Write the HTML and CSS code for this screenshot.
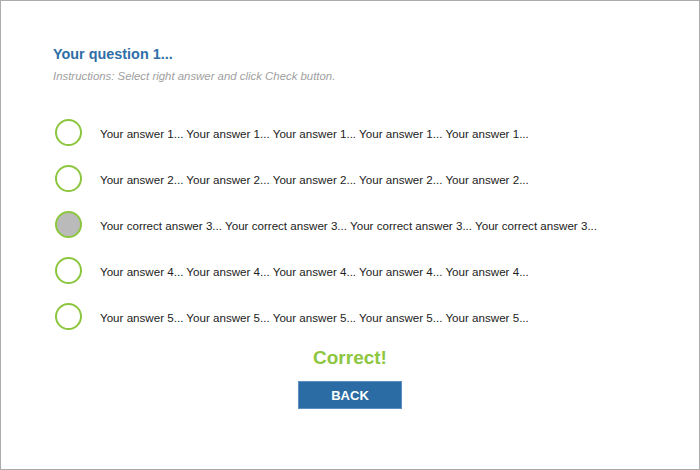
FILE: index.html
```html
<!DOCTYPE html>
<html lang="en">
<head>
  <meta charset="UTF-8">
  <meta name="viewport" content="width=device-width, initial-scale=1.0">
  <title>Quiz Question</title>
  <link rel="stylesheet" href="styles.css">
</head>
<body>
  <div class="page">
    <h1 class="question">Your question 1...</h1>
    <p class="instructions">Instructions: Select right answer and click Check button.</p>

    <div class="answers">
      <label class="answer">
        <input type="radio" name="q1" value="1">
        <span>Your answer 1... Your answer 1... Your answer 1... Your answer 1... Your answer 1...</span>
      </label>
      <label class="answer">
        <input type="radio" name="q1" value="2">
        <span>Your answer 2... Your answer 2... Your answer 2... Your answer 2... Your answer 2...</span>
      </label>
      <label class="answer">
        <input type="radio" name="q1" value="3" checked>
        <span>Your correct answer 3... Your correct answer 3... Your correct answer 3... Your correct answer 3...</span>
      </label>
      <label class="answer">
        <input type="radio" name="q1" value="4">
        <span>Your answer 4... Your answer 4... Your answer 4... Your answer 4... Your answer 4...</span>
      </label>
      <label class="answer">
        <input type="radio" name="q1" value="5">
        <span>Your answer 5... Your answer 5... Your answer 5... Your answer 5... Your answer 5...</span>
      </label>
    </div>

    <div class="result">Correct!</div>
    <div class="actions">
      <button class="back" type="button">BACK</button>
    </div>
  </div>
</body>
</html>
```

FILE: styles.css
```css
body {
  margin: 0;
  font-family: "Liberation Sans", Arial, sans-serif;
  background-color: #fff;
}

.page {
  width: 700px;
  height: 470px;
  box-sizing: border-box;
  border: 1px solid #ababab;
  padding: 44px 52px 0 52px;
}

.question {
  margin: 0;
  font-size: 14.4px;
  line-height: 18px;
  font-weight: bold;
  color: #2f6ea6;
}

.instructions {
  margin: 6px 0 0 0;
  font-size: 11.4px;
  line-height: 14px;
  font-style: italic;
  color: #a0a0a0;
}

.answers {
  margin-top: 26px;
  display: flex;
  flex-direction: column;
}

.answer {
  height: 46px;
  display: flex;
  align-items: center;
  gap: 18px;
  padding-left: 2px;
  font-size: 11.6px;
  color: #222;
  cursor: pointer;
}

.answer span {
  padding-top: 3px;
}

.answer input {
  appearance: none;
  -webkit-appearance: none;
  margin: 0;
  width: 27px;
  height: 27px;
  flex: none;
  box-sizing: border-box;
  border: 2px solid #8cc63f;
  border-radius: 50%;
  background-color: #fff;
}

.answer input:checked {
  background-color: #bababa;
}

.result {
  margin: 7px -52px 0 -52px;
  text-align: center;
  font-size: 19px;
  line-height: 24px;
  font-weight: bold;
  color: #8dc63f;
}

.actions {
  margin: 11px -52px 0 -52px;
  display: flex;
  justify-content: center;
}

.back {
  width: 104px;
  height: 28px;
  border: 1px solid #5a8fc0;
  background-color: #2c6ca4;
  color: #fff;
  font-family: "Liberation Sans", Arial, sans-serif;
  font-size: 13px;
  font-weight: bold;
  padding: 0;
  cursor: pointer;
}
```
